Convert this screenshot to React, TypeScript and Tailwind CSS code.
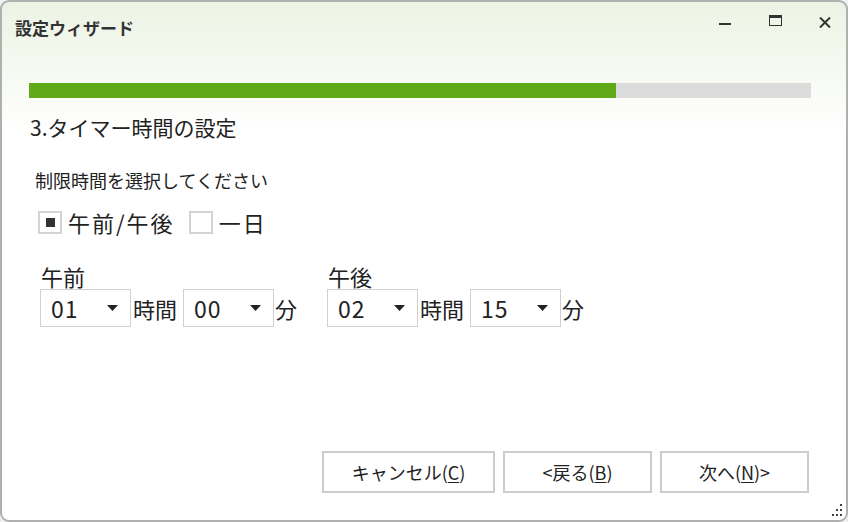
import { useState } from "react";

const FONT = { fontFamily: '"Noto Sans CJK JP", "Noto Sans", sans-serif' };

// Small dropdown box, Windows-style
function TimeSelect({ value }: { value: string }) {
  return (
    <div className="flex items-center justify-between w-[91px] h-[38px] border border-[#d0d0d0] bg-white pl-[10px] pr-[12px]">
      <span className="text-[23px] leading-none text-[#222] tracking-[1px]">{value}</span>
      <svg width="11" height="6" viewBox="0 0 11 6">
        <path d="M0 0H11L5.5 6Z" fill="#222" />
      </svg>
    </div>
  );
}

function Checkbox({ checked, label, onClick }: { checked: boolean; label: string; onClick: () => void }) {
  return (
    <button className="flex items-center gap-[6px]" onClick={onClick}>
      <span className="flex items-center justify-center w-[24px] h-[23px] border-2 border-[#d4d4d4] bg-white">
        {checked && <span className="w-[9px] h-[9px] bg-[#333]" />}
      </span>
      <span className="text-[22px] leading-[28px] text-[#222] tracking-[2px]">{label}</span>
    </button>
  );
}

function TimeGroup({ label, hour, minute }: { label: string; hour: string; minute: string }) {
  return (
    <div className="flex flex-col">
      <span className="text-[22px] leading-[25px] text-[#222] ml-[1px]">{label}</span>
      <div className="flex items-center">
        <TimeSelect value={hour} />
        <span className="text-[22px] leading-none text-[#222] ml-[2px] mr-[6px]">時間</span>
        <TimeSelect value={minute} />
        <span className="text-[22px] leading-none text-[#222] ml-[1px]">分</span>
      </div>
    </div>
  );
}

function WizardButton({ children }: { children: React.ReactNode }) {
  return (
    <button className="h-[42px] border-2 border-[#cccccc] bg-white text-[18px] text-[#222] flex items-center justify-center">
      {children}
    </button>
  );
}

export default function App() {
  // which mode is picked: am/pm or full day
  const [mode, setMode] = useState<"ampm" | "day">("ampm");

  return (
    <div style={FONT} className="w-[848px] h-[522px] bg-[#f0f0f0]">
      <div className="w-full h-full flex flex-col border-2 border-[#b0b0b0] rounded-[9px] bg-linear-to-b from-[#ecf3e3] to-white to-25% overflow-hidden relative">
        {/* title bar */}
        <div className="flex items-center h-[52px] pl-[13px] shrink-0">
          <span className="text-[17px] font-bold text-[#333]">設定ウィザード</span>
          <div className="ml-auto self-start mt-[5px] flex items-center gap-[10px] mr-[1px]">
            <div className="w-[40px] h-[30px] flex items-center justify-center">
              <span className="block w-[12px] h-[2px] bg-[#333] mt-[4px]" />
            </div>
            <div className="w-[40px] h-[30px] flex items-center justify-center">
              <span className="block w-[13px] h-[11px] border-[1.5px] border-t-[3px] border-[#333] -mt-[4px]" />
            </div>
            <div className="w-[40px] h-[30px] flex items-center justify-center">
              <svg width="12" height="11" viewBox="0 0 12 11">
                <path d="M1 0.5L11 10.5M11 0.5L1 10.5" stroke="#333" strokeWidth="2" />
              </svg>
            </div>
          </div>
        </div>

        {/* progress */}
        <div className="ml-[27px] mt-[29px] w-[782px] h-[15px] bg-[#dcdcdc] shrink-0">
          <div className="h-full bg-[#60aa1a]" style={{ width: "75%" }} />
        </div>

        <h1 className="ml-[28px] mt-[15px] text-[21px] leading-[28px] text-[#222]">3.タイマー時間の設定</h1>

        <p className="ml-[33px] mt-[27px] text-[18px] leading-[24px] text-[#222]">制限時間を選択してください</p>

        <div className="ml-[36px] mt-[16px] flex items-center gap-[14px]">
          <Checkbox checked={mode === "ampm"} label="午前/午後" onClick={() => setMode("ampm")} />
          <Checkbox checked={mode === "day"} label="一日" onClick={() => setMode("day")} />
        </div>

        <div className="ml-[38px] mt-[28px] flex gap-[30px]">
          <TimeGroup label="午前" hour="01" minute="00" />
          <TimeGroup label="午後" hour="02" minute="15" />
        </div>

        {/* footer buttons */}
        <div className="mt-auto mb-[27px] mr-[37px] flex justify-end gap-[8px]">
          <div className="w-[173px] flex flex-col">
            <WizardButton>
              キャンセル(<span className="underline underline-offset-2">C</span>)
            </WizardButton>
          </div>
          <div className="w-[149px] flex flex-col">
            <WizardButton>
              &lt;戻る(<span className="underline underline-offset-2">B</span>)
            </WizardButton>
          </div>
          <div className="w-[149px] flex flex-col">
            <WizardButton>
              次へ(<span className="underline underline-offset-2">N</span>)&gt;
            </WizardButton>
          </div>
        </div>

        {/* resize grip */}
        <svg width="16" height="16" viewBox="0 0 16 16" className="absolute right-[2px] bottom-[2px]">
          <rect x="12" y="2" width="2" height="2" fill="#444" />
          <rect x="8" y="7" width="2" height="2" fill="#444" />
          <rect x="12" y="7" width="2" height="2" fill="#444" />
          <rect x="4" y="12" width="2" height="2" fill="#444" />
          <rect x="8" y="12" width="2" height="2" fill="#444" />
          <rect x="12" y="12" width="2" height="2" fill="#444" />
        </svg>
      </div>
    </div>
  );
}
